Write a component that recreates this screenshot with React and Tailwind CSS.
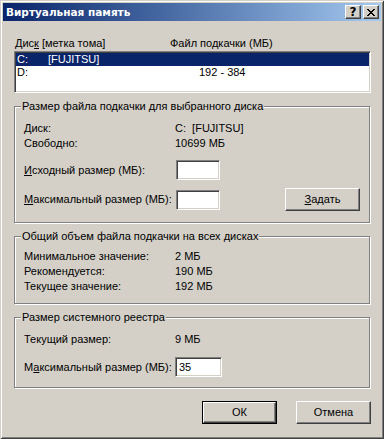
import React from "react";

function TitleBtn({ children }) {
  return (
    <div className="w-[16px] h-[14px] bg-[#d4d0c8] border border-t-white border-l-white border-b-[#404040] border-r-[#404040] shadow-[inset_-1px_-1px_0_#808080] flex items-center justify-center">
      {children}
    </div>
  );
}

function Edit({ value = "", w = "w-[44px]" }) {
  return (
    <div className={`${w} h-[20px] bg-white border border-t-[#808080] border-l-[#808080] border-b-white border-r-white shadow-[inset_1px_1px_0_#404040,inset_-1px_-1px_0_#d4d0c8] pl-[3px] flex items-center`}>
      {value}
    </div>
  );
}

function Button({ children, def }) {
  if (def) {
    return (
      <div className="w-[75px] h-[23px] border border-black">
        <div className="w-full h-full border border-t-white border-l-white border-b-[#404040] border-r-[#404040] shadow-[inset_-1px_-1px_0_#808080] flex items-center justify-center">
          {children}
        </div>
      </div>
    );
  }
  return (
    <div className="w-[75px] h-[23px] border border-t-white border-l-white border-b-[#404040] border-r-[#404040] shadow-[inset_-1px_-1px_0_#808080] flex items-center justify-center">
      {children}
    </div>
  );
}

function Group({ title, h, children }) {
  return (
    <div className={`relative ${h} mr-[1px] border border-[#808080] shadow-[inset_1px_1px_0_#ffffff,1px_1px_0_#ffffff]`}>
      <span className="absolute left-[6px] top-[-7px] bg-[#d4d0c8] px-[1px] leading-[13px]">{title}</span>
      {children}
    </div>
  );
}

export default function App() {
  return (
    <div className="w-[384px] h-[439px] bg-[#d4d0c8] flex flex-col font-['Liberation_Sans',Arial,sans-serif] text-[11px] leading-[13px] text-black shadow-[inset_1px_1px_0_#d4d0c8,inset_-1px_-1px_0_#404040,inset_2px_2px_0_#ffffff,inset_-2px_-2px_0_#808080] p-[3px] select-none">
      <div className="h-[18px] flex items-center justify-between bg-linear-to-r from-[#0a246a] to-[#a6caf0] pl-[3px] pr-[2px]">
        <span className="text-white font-bold text-[10.5px] font-['DejaVu_Sans',sans-serif]">Виртуальная память</span>
        <div className="flex gap-[2px]">
          <TitleBtn>
            <span className="font-bold text-[12px] leading-[12px] font-['DejaVu_Sans',sans-serif]">?</span>
          </TitleBtn>
          <TitleBtn>
            <svg width="8" height="7" viewBox="0 0 8 7" shapeRendering="crispEdges">
              <rect x="0" y="0" width="2" height="1" fill="#000" />
              <rect x="6" y="0" width="2" height="1" fill="#000" />
              <rect x="1" y="1" width="2" height="1" fill="#000" />
              <rect x="5" y="1" width="2" height="1" fill="#000" />
              <rect x="2" y="2" width="4" height="1" fill="#000" />
              <rect x="3" y="3" width="2" height="1" fill="#000" />
              <rect x="2" y="4" width="4" height="1" fill="#000" />
              <rect x="1" y="5" width="2" height="1" fill="#000" />
              <rect x="5" y="5" width="2" height="1" fill="#000" />
              <rect x="0" y="6" width="2" height="1" fill="#000" />
              <rect x="6" y="6" width="2" height="1" fill="#000" />
            </svg>
          </TitleBtn>
        </div>
      </div>

      <div className="pl-[11px] pr-[10px] flex flex-col">
        <div className="flex mt-[16px] h-[13px]">
          <span className="w-[156px] pl-[1px]">
            Дис<u>к</u> [метка тома]
          </span>
          <span>Файл подкачки (МБ)</span>
        </div>

        <div className="mt-[1px] h-[42px] bg-white border border-t-[#808080] border-l-[#808080] border-b-white border-r-white shadow-[inset_1px_1px_0_#404040,inset_-1px_-1px_0_#d4d0c8] p-[1px]">
          <div className="flex h-[13px] bg-[#0a246a] text-white">
            <span className="w-[32px] pl-[1px]">C:</span>
            <span className="w-[151px]">[FUJITSU]</span>
            <span></span>
          </div>
          <div className="flex h-[13px]">
            <span className="w-[32px] pl-[1px]">D:</span>
            <span className="w-[151px]"></span>
            <span>192 - 384</span>
          </div>
        </div>

        <div className="mt-[13px]">
          <Group title="Размер файла подкачки для выбранного диска" h="h-[117px]">
            <div className="pl-[9px] pr-[9px] pt-[15px] flex flex-col">
              <div className="flex h-[13px]">
                <span className="w-[151px]">Диск:</span>
                <span>C:&nbsp;&nbsp;[FUJITSU]</span>
              </div>
              <div className="flex h-[13px] mt-[2px]">
                <span className="w-[151px]">Свободно:</span>
                <span>10699 МБ</span>
              </div>
              <div className="flex items-center h-[20px] mt-[10px]">
                <span className="w-[152px]">
                  <u>И</u>сходный размер (МБ):
                </span>
                <Edit />
              </div>
              <div className="flex items-center h-[23px] mt-[8px]">
                <span className="w-[152px]">
                  <u>М</u>аксимальный размер (МБ):
                </span>
                <Edit />
                <div className="ml-auto">
                  <Button>
                    <span>
                      <u>З</u>адать
                    </span>
                  </Button>
                </div>
              </div>
            </div>
          </Group>
        </div>

        <div className="mt-[13px]">
          <Group title="Общий объем файла подкачки на всех дисках" h="h-[68px]">
            <div className="pl-[9px] pt-[13px] flex flex-col gap-[2px]">
              <div className="flex h-[13px]">
                <span className="w-[151px]">Минимальное значение:</span>
                <span>2 МБ</span>
              </div>
              <div className="flex h-[13px]">
                <span className="w-[151px]">Рекомендуется:</span>
                <span>190 МБ</span>
              </div>
              <div className="flex h-[13px]">
                <span className="w-[151px]">Текущее значение:</span>
                <span>192 МБ</span>
              </div>
            </div>
          </Group>
        </div>

        <div className="mt-[13px]">
          <Group title="Размер системного реестра" h="h-[71px]">
            <div className="pl-[9px] pt-[15px] flex flex-col">
              <div className="flex h-[13px]">
                <span className="w-[151px]">Текущий размер:</span>
                <span>9 МБ</span>
              </div>
              <div className="flex items-center h-[20px] mt-[11px]">
                <span className="w-[151px]">
                  М<u>а</u>ксимальный размер (МБ):
                </span>
                <Edit value="35" w="w-[47px]" />
              </div>
            </div>
          </Group>
        </div>

        <div className="flex justify-end gap-[19px] mt-[13px]">
          <Button def>ОК</Button>
          <Button>Отмена</Button>
        </div>
      </div>
    </div>
  );
}
